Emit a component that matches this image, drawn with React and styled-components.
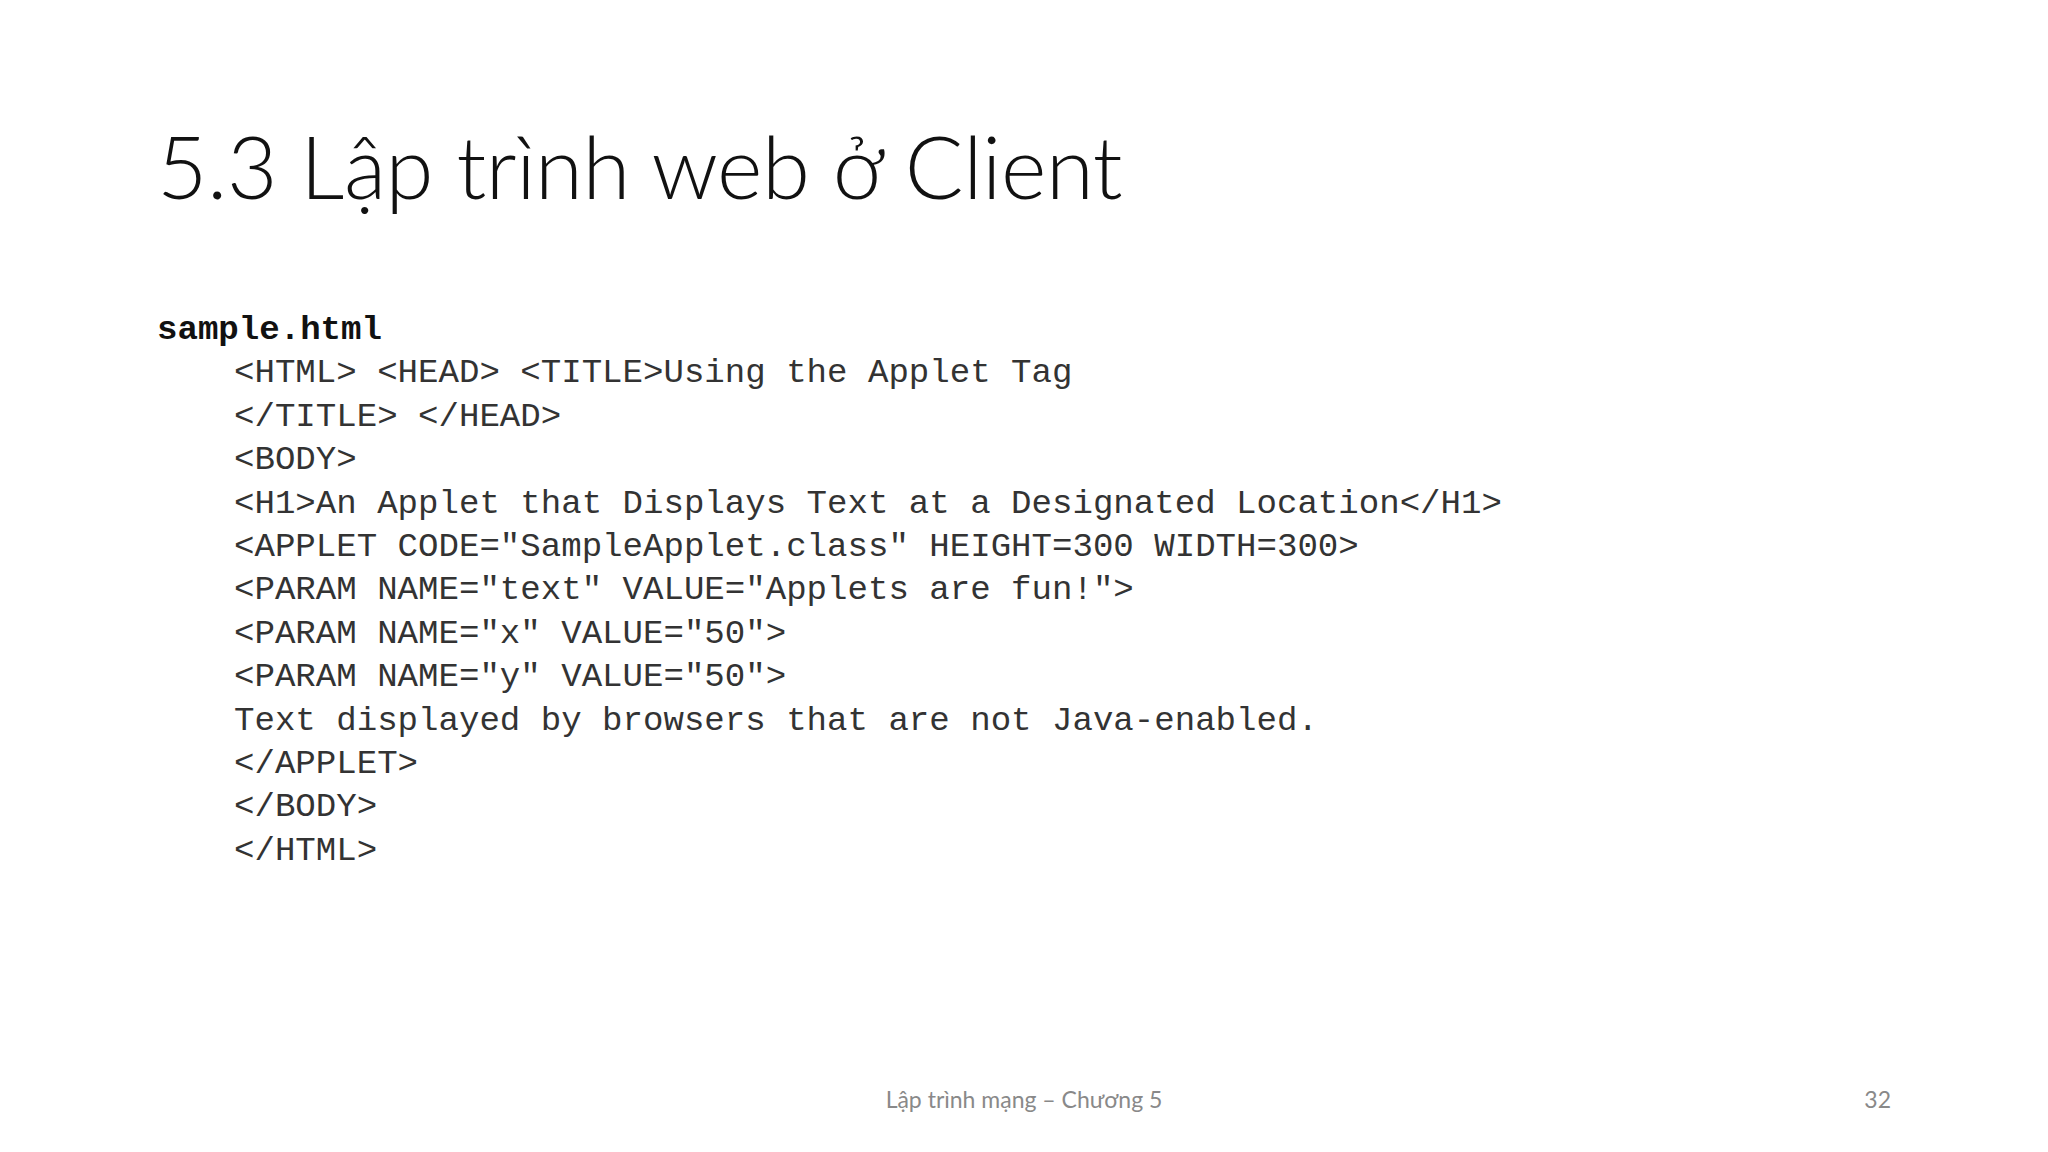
import React from "react";
import styled, { createGlobalStyle } from "styled-components";

const GlobalStyle = createGlobalStyle`
  html, body {
    margin: 0;
    padding: 0;
    background: #ffffff;
  }
`;

const Slide = styled.div`
  width: 2048px;
  height: 1152px;
  box-sizing: border-box;
  display: flex;
  flex-direction: column;
  padding: 116px 157px 0 157px;
  background: #ffffff;
  overflow: hidden;
`;

const Title = styled.h1`
  margin: 0;
  font-family: Lato, "Open Sans", sans-serif;
  font-weight: 300;
  font-size: 87px;
  line-height: 100px;
  color: #111111;
  letter-spacing: -0.4px;
`;

const Code = styled.div`
  margin-top: 93px;
  font-family: "Liberation Mono", "Courier New", monospace;
  font-size: 34.1px;
  line-height: 43.4px;
  color: #333333;
`;

const FileName = styled.div`
  font-weight: 700;
  color: #111111;
`;

const Line = styled.div`
  padding-left: ${(p) => p.indent}px;
  white-space: pre;
`;

const Footer = styled.div`
  margin-top: auto;
  margin-bottom: 39px;
  display: grid;
  grid-template-columns: 1fr auto 1fr;
  align-items: center;
  font-family: Lato, "Open Sans", sans-serif;
  font-size: 23px;
  color: #898989;
`;

const FooterCenter = styled.div`
  grid-column: 2;
  text-align: center;
`;

const PageNum = styled.div`
  grid-column: 3;
  justify-self: end;
`;

const lines = [
  "<HTML> <HEAD> <TITLE>Using the Applet Tag",
  "</TITLE> </HEAD>",
  "<BODY>",
  "<H1>An Applet that Displays Text at a Designated Location</H1>",
  '<APPLET CODE="SampleApplet.class" HEIGHT=300 WIDTH=300>',
  '<PARAM NAME="text" VALUE="Applets are fun!">',
  '<PARAM NAME="x" VALUE="50">',
  '<PARAM NAME="y" VALUE="50">',
  "Text displayed by browsers that are not Java-enabled.",
  "</APPLET>",
  "</BODY>",
  "</HTML>",
];

export default function App() {
  return (
    <>
      <GlobalStyle />
      <Slide>
        <Title>5.3 Lập trình web ở Client</Title>
        <Code>
          <FileName>sample.html</FileName>
          {lines.map((l, i) => (
            <Line key={i} indent={77}>
              {l}
            </Line>
          ))}
        </Code>
        <Footer>
          <FooterCenter>Lập trình mạng – Chương 5</FooterCenter>
          <PageNum>32</PageNum>
        </Footer>
      </Slide>
    </>
  );
}
